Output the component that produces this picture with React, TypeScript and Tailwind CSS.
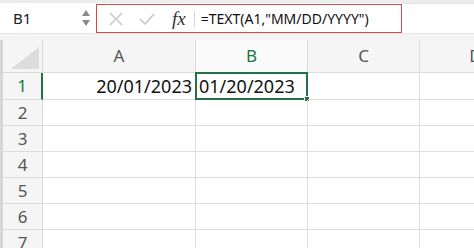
import React from 'react';

const cols = ['A', 'B', 'C', 'D'];
const rows = [1, 2, 3, 4, 5, 6, 7];

function FormulaBar() {
  return (
    <div className="flex h-[33px] border-t-[3px] border-[#ececec] bg-white">
      {/* name box */}
      <div className="flex w-[95px] items-center justify-between pl-[13px] pr-[4px]">
        <span className="text-[15px] text-[#222]">B1</span>
        <div className="flex flex-col items-center gap-[4px] pr-[1px]">
          <svg width="8" height="6" viewBox="0 0 8 6">
            <path d="M4 0 L8 6 L0 6 Z" fill="#8a8a8a" />
          </svg>
          <svg width="8" height="6" viewBox="0 0 8 6">
            <path d="M0 0 L8 0 L4 6 Z" fill="#8a8a8a" />
          </svg>
        </div>
      </div>
      <div className="ml-[1px] mt-[1px] flex h-[29px] w-[306px] items-center border-[1.5px] border-[#d24a4a]">
        <svg width="14" height="14" viewBox="0 0 14 14" className="ml-[12px]">
          <path d="M1 1 L13 13 M13 1 L1 13" stroke="#c4c4c4" strokeWidth="1.4" />
        </svg>
        <svg width="16" height="12" viewBox="0 0 16 12" className="ml-[16px]">
          <path d="M1 6 L6 11 L15 1" stroke="#c4c4c4" strokeWidth="1.4" fill="none" />
        </svg>
        <span className="ml-[17px] text-[19px] italic leading-none text-[#333]" style={{ fontFamily: '"Liberation Serif", serif' }}>
          fx
        </span>
        <div className="ml-[8px] h-[16px] w-px bg-[#d8d8d8]" />
        <span className="ml-[6px] text-[14px] text-[#111]">=TEXT(A1,"MM/DD/YYYY")</span>
      </div>
      <div className="flex-1 border-t border-[#e2e2e2] bg-white" />
    </div>
  );
}

export default function App() {
  return (
    <div className="h-[248px] w-[474px] overflow-hidden bg-white" style={{ fontFamily: '"Noto Sans", sans-serif' }}>
      <FormulaBar />
      <div className="h-[7px] border-t border-[#e4e4e4] bg-[#f3f3f3]" />
      <div className="grid grid-cols-[40px_153px_112px_112px_112px] grid-rows-[33px_27px_26px_26px_26px_26px_26px_26px] border-l-[3px] border-[#d6d6d6]">
        {/* corner */}
        <div className="relative border-b border-r border-[#d9d9d9] bg-[#f5f5f5]">
          <svg width="28" height="22" viewBox="0 0 28 22" className="absolute bottom-[3px] right-[3px]">
            <path d="M28 0 L28 22 L0 22 Z" fill="#dcdcdc" />
          </svg>
        </div>
        {cols.map((c) => (
          <div
            key={c}
            className={`flex items-center justify-center border-b border-r border-[#dcdcdc] text-[17px] ${
              c === 'B' ? 'bg-[#fafafa] text-[#217346]' : 'bg-[#f5f5f5] text-[#555]'
            }`}
          >
            {c}
          </div>
        ))}
        {rows.map((r) => (
          <React.Fragment key={r}>
            <div
              className={`flex items-center justify-center border-b border-[#dcdcdc] text-[17px] ${
                r === 1 ? 'border-r-2 border-r-[#217346] bg-[#f5f5f5] text-[#217346]' : 'border-r border-r-[#dcdcdc] bg-[#f5f5f5] text-[#555]'
              }`}
            >
              {r}
            </div>
            {cols.map((c) => (
              <div key={c} className="relative flex items-center border-b border-r border-[#dedede] text-[18px] text-[#111]">
                {r === 1 && c === 'A' && <span className="ml-auto pr-[3px]">20/01/2023</span>}
                {r === 1 && c === 'B' && (
                  <>
                    <span className="pl-[3px]">01/20/2023</span>
                    <div className="absolute -left-[1px] -top-[1px] bottom-[-1px] right-[-1px] border-2 border-[#217346]" />
                    <div className="absolute -bottom-[3px] -right-[3px] h-[6px] w-[6px] border border-white bg-[#217346]" />
                  </>
                )}
              </div>
            ))}
          </React.Fragment>
        ))}
      </div>
    </div>
  );
}
